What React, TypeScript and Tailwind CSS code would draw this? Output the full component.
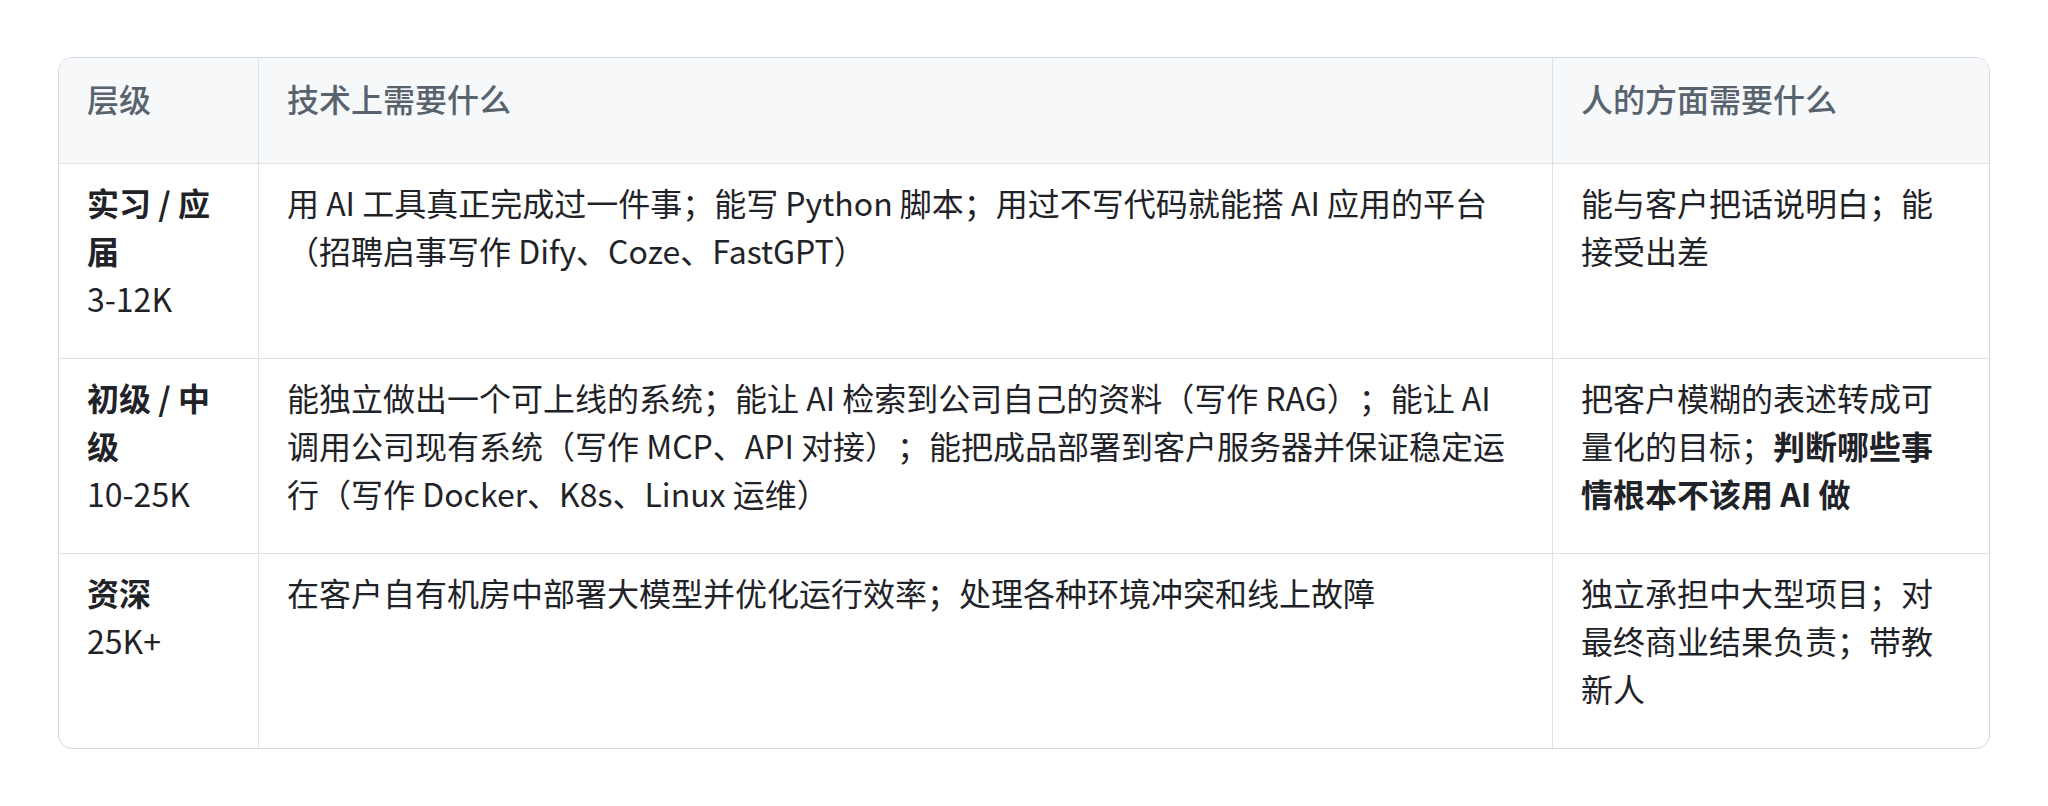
const font = { fontFamily: '"Noto Sans CJK SC", "Noto Sans", sans-serif' };

type Row = {
  level: string;
  pay: string;
  tech: React.ReactNode;
  human: React.ReactNode;
};

const rows: Row[] = [
  {
    level: "实习 / 应届",
    pay: "3-12K",
    tech: "用 AI 工具真正完成过一件事；能写 Python 脚本；用过不写代码就能搭 AI 应用的平台（招聘启事写作 Dify、Coze、FastGPT）",
    human: "能与客户把话说明白；能接受出差",
  },
  {
    level: "初级 / 中级",
    pay: "10-25K",
    tech: "能独立做出一个可上线的系统；能让 AI 检索到公司自己的资料（写作 RAG）；能让 AI 调用公司现有系统（写作 MCP、API 对接）；能把成品部署到客户服务器并保证稳定运行（写作 Docker、K8s、Linux 运维）",
    human: (
      <>
        把客户模糊的表述转成可量化的目标；
        <strong className="font-bold">判断哪些事情根本不该用 AI 做</strong>
      </>
    ),
  },
  {
    level: "资深",
    pay: "25K+",
    tech: "在客户自有机房中部署大模型并优化运行效率；处理各种环境冲突和线上故障",
    human: "独立承担中大型项目；对最终商业结果负责；带教新人",
  },
];

const cols = "grid grid-cols-[199px_1294px_1fr]";

export default function App() {
  return (
    <div className="min-h-[806px] bg-white px-[58px] pt-[57px]" style={font}>
      <div className="overflow-hidden rounded-[14px] border border-[#d3d9df] text-[32px] leading-[48px] text-[#1f2328] [text-spacing-trim:space-all]">
        <div className={`${cols} bg-[#f6f8fa] font-medium text-[#59636e]`}>
          <div className="px-7 pt-4 pb-[41px]">层级</div>
          <div className="border-l border-[#dde2e7] px-7 pt-4 pb-[41px]">技术上需要什么</div>
          <div className="border-l border-[#dde2e7] px-7 pt-4 pb-[41px]">人的方面需要什么</div>
        </div>
        {rows.map((r) => (
          <div key={r.level} className={`${cols} border-t border-[#dde2e7]`}>
            <div className="px-7 pt-[14px] pb-[36px]">
              <strong className="font-bold">{r.level}</strong>
              <br />
              {r.pay}
            </div>
            <div className="border-l border-[#dde2e7] px-7 pt-[14px] pb-[36px]">{r.tech}</div>
            <div className="border-l border-[#dde2e7] px-7 pt-[14px] pb-[36px]">{r.human}</div>
          </div>
        ))}
      </div>
    </div>
  );
}
